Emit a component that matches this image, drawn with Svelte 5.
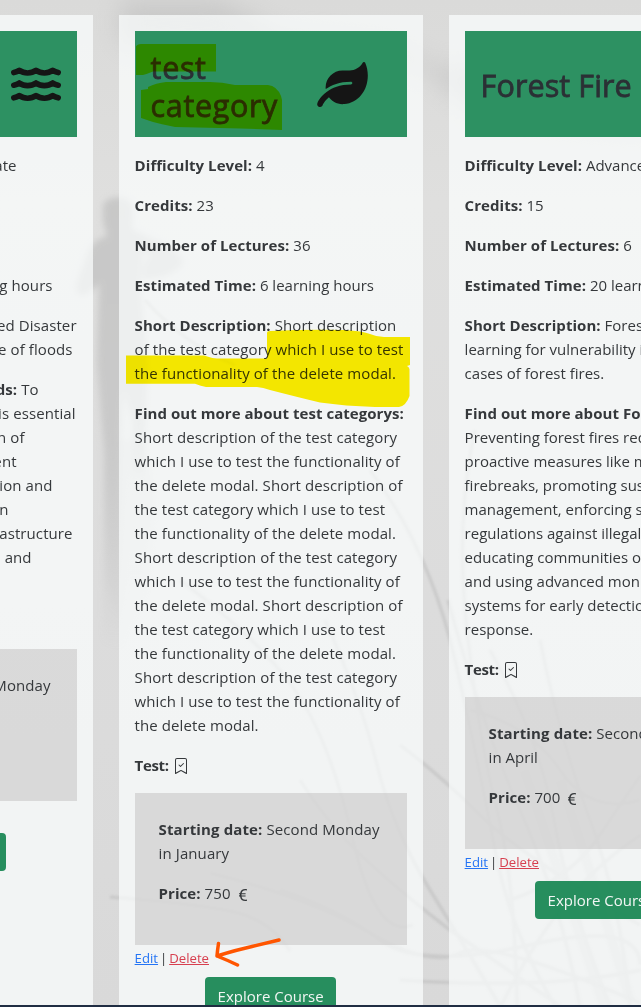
<script>
  const long = [
    'Short description of the test category',
    'which I use to test the functionality of',
    'the delete modal. Short description of',
    'the test category which I use to test',
    'the functionality of the delete modal.'
  ];
  const floods = {
    level: ['Intermediate', 60],
    time: ['12 learning hours', 24],
    short: [['Learning focused Disaster', 0], ['in the case of floods', 4]],
    more: [
      ['prevent floods, it is essential', 1], ['to ensure protection of', 52], ['the environment', 60],
      ['by vegetation and', 24], ['retention', 68], ['green infrastructure', 4], ['and', 45], ['communities', 99]
    ]
  };
  const courses = [
    {
      title: ['test', 'category'], leaf: true, level: '4', credits: '23', lectures: '36', time: '6 learning hours',
      short: ['Short description', 'of the test category which I use to test', 'the functionality of the delete modal.'],
      name: 'test categorys:', more: [...long, ...long, long[0], long[1], 'the delete modal.'],
      date: ['Second Monday', 'in January'], price: '750'
    },
    {
      title: ['Forest Fire'], leaf: false, level: 'Advanced', credits: '15', lectures: '6', time: '20 learning hours',
      short: ['Forest fire', 'learning for vulnerability in', 'cases of forest fires.'],
      name: 'Forest Fires:',
      more: [
        'Preventing forest fires requires', 'proactive measures like making', 'firebreaks, promoting sustainable',
        'management, enforcing strict', 'regulations against illegal fires,', 'educating communities on risks,',
        'and using advanced monitoring', 'systems for early detection and', 'response.'
      ],
      date: ['Second Monday', 'in April'], price: '700'
    }
  ];
</script>

{#snippet bookmark()}
  <svg class="mark" viewBox="0 0 16 16" width="16" height="16" fill="currentColor">
    <path d="M10.854 5.146a.5.5 0 0 1 0 .708l-3 3a.5.5 0 0 1-.708 0l-1.5-1.5a.5.5 0 1 1 .708-.708L7.5 7.793l2.646-2.647a.5.5 0 0 1 .708 0" />
    <path d="M2 2a2 2 0 0 1 2-2h8a2 2 0 0 1 2 2v13.5a.5.5 0 0 1-.777.416L8 13.101l-5.223 2.815A.5.5 0 0 1 2 15.5zm2-1a1 1 0 0 0-1 1v12.566l4.723-2.482a.5.5 0 0 1 .554 0L13 14.566V2a1 1 0 0 0-1-1z" />
  </svg>
{/snippet}

<div class="page">
  <svg class="scene" viewBox="0 0 641 1007" width="641" height="1007">
    <defs>
      <filter id="soft" x="-20%" y="-20%" width="140%" height="140%"><feGaussianBlur stdDeviation="1.3" /></filter>
      <filter id="figure" x="-20%" y="-20%" width="140%" height="140%"><feGaussianBlur stdDeviation="3" /></filter>
      <filter id="haze" x="-50%" y="-50%" width="200%" height="200%"><feGaussianBlur stdDeviation="12" /></filter>
      <linearGradient id="sky" x1="0" y1="0" x2="0" y2="1">
        <stop offset="0" stop-color="#dadad9" /><stop offset=".2" stop-color="#dfdfde" />
        <stop offset=".6" stop-color="#dcdcdc" /><stop offset="1" stop-color="#d9d9d9" />
      </linearGradient>
      <linearGradient id="body" gradientUnits="userSpaceOnUse" x1="0" y1="200" x2="0" y2="650">
        <stop offset="0" stop-color="#b6b6b6" /><stop offset=".55" stop-color="#bababa" /><stop offset="1" stop-color="#bababa" stop-opacity="0" />
      </linearGradient>
    </defs>
    <rect width="641" height="1007" fill="url(#sky)" />
    <g filter="url(#haze)" fill="#b5b5b5" opacity=".45">
      <path d="M120 0h100l60 32 110 10 50 26 90-10 120 40v34L480 116 420 66 330 56 120 44z" />
    </g>
    <g filter="url(#figure)" fill="url(#body)" opacity=".55">
      <path d="M103 204q8-9 20-6 11 3 10 13l-1 18 20 10q26 10 31 22-2 10-22 16l-18 3q-2-20 8-24l-8-4-3 30 8 90-3 60-2 40h-9l-2-50-8-30-3 60 2 200-20-10 1-190-7-90 2-78-15 12q-10 0-7-14l11-30q5-12 19-16l-4-14z" />
      <path d="M104 440h40l10 60-8 90-24 50-14-60z" opacity=".5" />
    </g>
    <g filter="url(#soft)" fill="none" stroke="#b5b5b5" stroke-width="3.5" opacity=".42">
      <path d="M145 300q40 45 90 65M180 580q80 60 115 110t58 150 60 85M370 470q60 80 85 190t40 190 60 156M325 620q36 80 52 145t53 125 70 116" />
      <path d="M475 430q-20 90-8 200t30 180 20 196M448 600q32 120 72 210t60 196M490 650q50 90 64 170t56 186M300 780q28 45 66 80t84 70l110 76" />
      <path d="M110 897q80 6 120 14t60 40M210 873q100 25 160 60t90 20 180 50M641 835q-80 50-140 171M400 745q40 30 80 70t160 110M280 890q60 20 100 50t150 5 110 20" />
      <path d="M540 640q20 100 50 180t40 186M470 710q60 15 90 60t80 30M510 900q60-20 90-65t41-60M400 980q150 10 241-10" />
      <path stroke-width="10" opacity=".6" d="M524 770q30 90 80 236M560 780q40 120 70 220" />
    </g>
  </svg>

  <main class="cards">
    <article class="card floods">
      <header class="band end">
        <svg class="waves" viewBox="0 0 50 34" width="50" height="34">
          <g fill="none" stroke="#151515" stroke-width="5.6" stroke-linecap="round" stroke-linejoin="round">
            {#each [0, 12.6, 25.2] as dy}
              <path transform="translate(0 {dy})" d="M2.800 5.600Q6 5 8.300 3.300Q12 6 16.600 6Q21.300 6 25 3.300Q28.700 6 33.400 6Q38 6 41.700 3.300Q44 5 47.200 5.600" />
            {/each}
          </g>
        </svg>
      </header>
      <p style:padding-right="{floods.level[1]}px">{floods.level[0]}</p>
      <p>&nbsp;</p>
      <p>&nbsp;</p>
      <p style:padding-right="{floods.time[1]}px">{floods.time[0]}</p>
      <p>{#each floods.short as [text, gap]}<span class="line" style:padding-right="{gap}px">{text}</span>{/each}</p>
      <p>
        <span class="line to"><b>Find out more about Floods:</b> To</span>
        {#each floods.more as [text, gap]}<span class="line" style:padding-right="{gap}px">{text}</span>{/each}
      </p>
      <p>&nbsp;</p>
      <section class="terms"><p><span class="line monday">First Monday</span><span class="line">&nbsp;</span></p><p>&nbsp;</p></section>
      <div class="links">&nbsp;</div>
      <button>Explore Course</button>
    </article>

    {#each courses as c}
      <article class="card" class:forest={!c.leaf}>
        <header class="band">
          <h2>{#each c.title as word}<span class="line">{word}</span>{/each}</h2>
          {#if c.leaf}
            <svg class="leaf" viewBox="0 0 576 512" width="51" height="45">
              <path fill="#151515" d="M546.2 9.7c-5.6-12.5-21.6-13-28.3-1.2C486.9 62.4 431.4 96 368 96h-80C182 96 96 182 96 288c0 7 .8 13.7 1.5 20.5C161.3 262.8 253.4 224 384 224c8.8 0 16 7.2 16 16s-7.2 16-16 16C132.6 256 26 410.1 2.4 468c-6.6 16.3 1.2 34.9 17.5 41.6 16.4 6.8 35-1.1 41.8-17.3 1.5-3.6 20.9-47.9 71.9-90.6 32.4 43.9 94 85.8 174.9 77.2C465.5 467.5 576 326.7 576 154.3c0-50.2-10.8-102.2-29.8-144.6z" />
            </svg>
          {/if}
        </header>
        <p><b>Difficulty Level:</b> {c.level}</p>
        <p><b>Credits:</b> {c.credits}</p>
        <p><b>Number of Lectures:</b> {c.lectures}</p>
        <p class="time"><b>Estimated Time:</b> {c.time}</p>
        <p>
          {#each c.short as text, i}<span class="line">{#if i === 0}<b>Short Description:</b>{' '}{/if}{text}</span>{/each}
        </p>
        <p>
          <span class="line"><b>Find out more about {c.name}</b></span>
          {#each c.more as text}<span class="line">{text}</span>{/each}
        </p>
        <p><b class="tight">Test:</b> {@render bookmark()}</p>
        <section class="terms">
          <p><span class="line"><b class="start">Starting date:</b> {c.date[0]}</span><span class="line">{c.date[1]}</span></p>
          <p>
            <b>Price:</b> {c.price}
            <svg class="euro" viewBox="0 0 16 16" width="16" height="16" fill="currentColor"><path d="M4 9.42h1.063C5.4 12.323 7.317 14 10.34 14c.622 0 1.167-.068 1.659-.185v-1.3c-.484.119-1.045.17-1.659.17-2.1 0-3.455-1.198-3.775-3.264h4.017v-.928H6.497v-.936q-.002-.165.008-.329h4.078v-.927H6.618c.388-1.898 1.719-2.985 3.723-2.985.614 0 1.175.05 1.659.177V2.194A6.6 6.6 0 0 0 10.341 2c-2.928 0-4.82 1.569-5.244 4.3H4v.928h1.01v.945H4z" /></svg>
          </p>
        </section>
        <div class="links"><a class="edit" href="#edit">Edit</a> <span class="bar">|</span> <a class="delete" href="#delete">Delete</a></div>
        <button>Explore Course</button>
      </article>
    {/each}
  </main>
  <footer></footer>

  <svg class="marker" viewBox="0 0 641 1007" width="641" height="1007" fill="#fff000">
    <path d="M136 46.5Q137 44 141 44H216V71.5H153Q147 74 143 75H136Z" />
    <path d="M148 89V87Q156 83 166 82H210Q222 82 235 85H268Q277 86 281 96L282 100V130L240 128.5 175 127Q160 124 153 122 L141 118V90Z" />
    <path d="M267 333Q267 331 270 331Q310 329 345 330Q363 331 370 334Q377 337 384 337H410V365L407 366Q409 367 409.500 369V396Q406 406 399 407H375Q345 406 320 402.500Q297 397 270 390Q263 387.500 257 387H206Q201 386 195 383.700H126V355.500H204Q211 358 217 358.500H267Z" />
  </svg>
  <svg class="arrow" viewBox="0 0 641 1007" width="641" height="1007" fill="none" stroke="#ff5500" stroke-width="3.5" stroke-linecap="round" stroke-linejoin="round">
    <path d="M279 940L252 946.500Q236 950 217 956M218.500 943.500Q217.500 950 217 956Q227 960 237.500 965" />
  </svg>
</div>

<style>
  :global(body) { margin: 0; overflow: hidden; }
  .page {
    position: relative; width: 641px; height: 1007px; overflow: hidden; display: flex; flex-direction: column;
    isolation: isolate; font: 15px/24px 'Open Sans', 'Noto Sans', sans-serif; letter-spacing: .09px; color: #35383b;
  }
  .scene, .marker, .arrow { position: absolute; inset: 0; pointer-events: none; }
  .scene { z-index: -1; }
  .marker { mix-blend-mode: multiply; }
  .cards { display: flex; align-items: stretch; gap: 26px; height: 990px; padding-top: 15px; margin-left: -211.4px; width: max-content; }
  .card {
    width: 304px; box-sizing: border-box; padding: 16px; background: rgba(252, 255, 255, .7);
    display: flex; flex-direction: column; white-space: nowrap; overflow: hidden;
  }
  .forest { letter-spacing: 0; }
  .band {
    flex: none; height: 106px; box-sizing: border-box; padding: 2px 16px 0; margin-bottom: 16px; display: flex; align-items: center;
    justify-content: space-between; background: rgba(25, 135, 84, .91);
  }
  .band.end { justify-content: flex-end; padding-top: 0; }
  .leaf { margin: -2px 23px 0 0; }
  h2 {
    margin: 1px 0 0; font-size: 30.5px; line-height: 38px; font-weight: 500; letter-spacing: .65px; color: #2b3035;
    -webkit-text-stroke: .8px #2b3035;
  }
  .forest h2 { letter-spacing: .1px; margin-top: 0; }
  p { margin: 0 0 16px; flex: none; }
  .time { letter-spacing: 0; }
  .line { display: block; }
  b { font-weight: 700; letter-spacing: .05px; }
  .start { letter-spacing: .12px; }
  .tight { letter-spacing: -.35px; }
  .floods { text-align: right; }
  .to { padding-right: 38px; }
  .monday { padding-right: 2px; }
  .mark { vertical-align: -3px; }
  .euro { vertical-align: -4px; }
  .terms { flex: none; height: 152px; box-sizing: border-box; padding: 24px; background: rgba(190, 188, 188, .48); }
  .links { flex: none; height: 24px; margin-bottom: 8px; font-size: 13.2px; line-height: 26px; letter-spacing: 0; word-spacing: -1.5px; }
  .edit { color: #2474f5; }
  .delete { color: #d73f4f; }
  button {
    flex: none; align-self: center; width: 131px; height: 38px; border: 0; border-radius: 4px; padding: 0;
    background: rgba(25, 135, 84, .94); color: #f2f6f4; font: inherit; line-height: 38px;
  }
  footer { height: 2px; background: #202d42; position: relative; }
</style>
